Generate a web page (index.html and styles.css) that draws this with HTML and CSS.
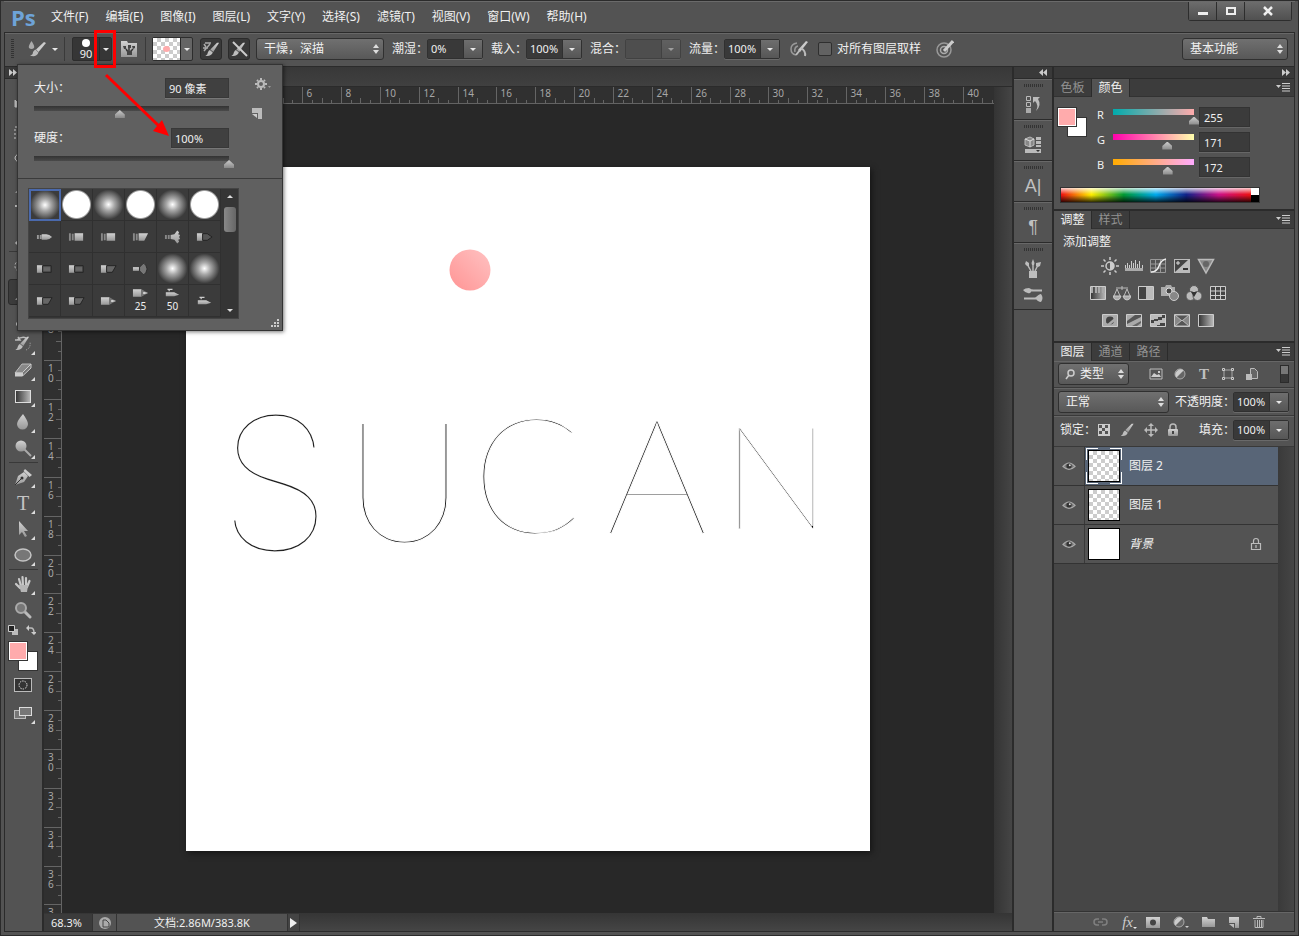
FILE: index.html
```html
<!DOCTYPE html>
<html lang="zh-CN">

<head>
  <meta charset="UTF-8" />
  <meta name="viewport" content="width=device-width, initial-scale=1.0" />
  <title>Ps</title>
  <link rel="stylesheet" href="styles.css">
</head>

<body>
  <!-- shared gradients and symbols -->
  <svg class="defs" width="0" height="0" aria-hidden="true">
    <defs>
      <linearGradient id="metal" x1="0" y1="0" x2="0" y2="1">
        <stop offset="0" stop-color="#d2d2d2" />
        <stop offset="1" stop-color="#979797" />
      </linearGradient>
      <linearGradient id="ramp">
        <stop offset="0" stop-color="#333" />
        <stop offset="1" stop-color="#bbb" />
      </linearGradient>
      <linearGradient id="dot" x1="0" y1="1" x2="1" y2="0">
        <stop offset="0" stop-color="#ff9494" />
        <stop offset="1" stop-color="#ffc2c2" />
      </linearGradient>
    </defs>
    <symbol id="eye" viewBox="0 0 14 10">
      <path d="M1 5.500Q7-1.500 13 5.500Q7 11 1 5.500Z" fill="#777" stroke="#aaa" stroke-width="1.200" />
      <circle cx="7" cy="5" r="2.600" fill="#333" />
      <circle cx="7.800" cy="4.200" r="1" fill="#ddd" />
    </symbol>
    <symbol id="lock" viewBox="0 0 12 14">
      <path d="M3 7V4a3 3 0 0 1 6 0v3" fill="none" stroke="#bbb" stroke-width="1.500" />
      <rect x="1" y="6" width="10" height="7" rx="1" fill="url(#metal)" />
      <path d="M6 8v3" stroke="#444" stroke-width="2" />
    </symbol>
    <symbol id="brush" viewBox="0 0 18 18">
      <path d="M17.500 1L10.500 12 7 9 15 1Z" fill="url(#metal)" />
      <path d="M6.500 9.500L10 12.500Q8 17.500 1 16.500 4 15 4 12.500 5 10 6.500 9.500Z" fill="#bdbdbd" />
    </symbol>
    <symbol id="menu-icon" viewBox="0 0 14 9">
      <path d="M0 2h5L2.500 5Z" fill="#ccc" />
      <path d="M6 .5h8M6 3h8M6 5.500h8M6 8h8" stroke="#ccc" />
    </symbol>
    <symbol id="b-round" viewBox="0 0 18 10">
      <path d="M1 3h2v4H1zM4 3h2v4H4z" fill="#999" />
      <path d="M6 2h5q3 0 6 3-3 3-6 3H6Z" fill="url(#metal)" />
    </symbol>
    <symbol id="b-flat" viewBox="0 0 18 10">
      <path d="M1 1h2v8H1zM4 1.500h2v7H4z" fill="#888" />
      <path d="M7 1h9v8H7Z" fill="url(#metal)" />
    </symbol>
    <symbol id="b-angle" viewBox="0 0 18 10">
      <path d="M1 1h2v8H1zM4 1.500h2v7H4z" fill="#888" />
      <path d="M7 1h10l-4 8H7Z" fill="url(#metal)" />
    </symbol>
    <symbol id="b-fan" viewBox="0 0 18 14">
      <path d="M1 5h2v4H1zM4 5h2v4H4z" fill="#888" />
      <path d="M7 5L11 4 14 0l2 2-1 2 2 1-1 2 1 2-2 1 1 2-2 2-3-4-4-1Z" fill="url(#metal)" />
    </symbol>
    <symbol id="b-darkfan" viewBox="0 0 18 14">
      <path d="M1 5h7v4H1z" fill="url(#metal)" />
      <path d="M8 5l4-4q3 0 4 6-1 6-4 6L8 9Z" fill="#777" stroke="#292929" />
    </symbol>
    <symbol id="b-point" viewBox="0 0 18 10">
      <path d="M1 1h6v8H1z" fill="url(#metal)" />
      <path d="M7 1.500h5l5 3.500-5 3.500H7Z" fill="#555" stroke="#222" />
    </symbol>
    <symbol id="b-dark" viewBox="0 0 18 10">
      <path d="M1 1h6v8H1z" fill="url(#metal)" />
      <path d="M7 1.500h9v7H7Z" fill="#555" stroke="#222" />
      <path d="M8 4h7M8 6h7" stroke="#777" />
    </symbol>
    <symbol id="b-darkangle" viewBox="0 0 18 10">
      <path d="M1 1h6v8H1z" fill="url(#metal)" />
      <path d="M7 1.500h10l-4 7H7Z" fill="#666" stroke="#222" />
    </symbol>
    <symbol id="b-pencil" viewBox="0 0 18 10">
      <path d="M1 1h9v8H1z" fill="url(#metal)" />
      <path d="M10 1l7 4-7 4Z" fill="#777" />
      <path d="M12 4l5 1-5 1Z" fill="#eee" />
    </symbol>
    <symbol id="b-air" viewBox="0 0 18 12">
      <path d="M3 1.500h6M5 2v2" stroke="#ccc" stroke-width="1.500" />
      <path d="M1 5h10l6 3-6 2H1Z" fill="url(#metal)" />
    </symbol>
  </svg>

  <div class="app">
    <header class="menubar">
      <span class="logo">Ps</span>
      <nav class="menus">
        <a href="#">文件(F)</a>
        <a href="#">编辑(E)</a>
        <a href="#">图像(I)</a>
        <a href="#">图层(L)</a>
        <a href="#">文字(Y)</a>
        <a href="#">选择(S)</a>
        <a href="#">滤镜(T)</a>
        <a href="#">视图(V)</a>
        <a href="#">窗口(W)</a>
        <a href="#">帮助(H)</a>
      </nav>
      <div class="window-buttons">
        <button aria-label="最小化"><svg width="10" height="10"><path d="M0 6h10v3H0z" fill="#eee" /></svg></button>
        <button aria-label="最大化"><svg width="10" height="10"><path d="M1 2h8v6H1z" fill="none" stroke="#eee" stroke-width="2" /></svg></button>
        <button class="close" aria-label="关闭"><svg width="10" height="10"><path d="M1 1l8 8M9 1L1 9" stroke="#eee" stroke-width="2.500" /></svg></button>
      </div>
    </header>

    <div class="options">
      <span class="grip"></span>
      <button class="plain tool-preset" aria-label="工具预设">
        <svg width="18" height="16" viewBox="0 0 18 16"><path d="M3.500 0Q7 5 6 7 3.500 9 1 7 0 5 3.500 0Z" fill="#aaa" /><path d="M18 2L10.500 11 8 8.500 16 1Z" fill="#ccc" /><path d="M7.500 8.500l3 3Q8 17 2 14.500 5 14 5 11 6 9 7.500 8.500Z" fill="#bbb" /></svg>
        <i class="caret"></i>
      </button>
      <span class="divider"></span>
      <button class="brush-preview" aria-label="画笔">
        <span class="brush-tip"><i></i>90</span>
        <span class="drop"><i class="caret"></i></span>
      </button>
      <button class="plain" aria-label="画笔面板">
        <svg width="18" height="16"><path d="M1 0h6l1 2h9v14H1Z" fill="url(#metal)" /><path d="M6 8l2 3M9 6v5M13 8l-3 3" stroke="#333" stroke-width="1.500" /><path d="M3 5h3v3H4zM8 4h3v3H8zM12 5h3v2l-2 1ZM7 10h5v4H7z" fill="#444" /></svg>
      </button>
      <span class="divider"></span>
      <button class="load-preview" aria-label="当前画笔载入">
        <span class="checker"><i></i></span>
        <span class="drop"><i class="caret"></i></span>
      </button>
      <button class="pressed" aria-label="每次描边后载入画笔">
        <svg width="18" height="16"><path d="M1 7h5M9 2L3 2M8 3L2 10M2 3l2 3" stroke="#aaa" fill="none" stroke-width="1.500" /><use href="#brush" width="16" height="15" x="2" y="1" /></svg>
      </button>
      <button class="pressed" aria-label="每次描边后清理画笔">
        <svg width="18" height="16"><use href="#brush" width="16" height="15" y="1" /><path d="M3 1l14 14" stroke="#ccc" stroke-width="2" /></svg>
      </button>
      <select class="select mix" aria-label="混合画笔组合">
        <option>干燥，深描</option>
      </select>
      <label class="field" for="wet">潮湿：</label>
      <span class="combo"><input id="wet" type="text" value="0%"><button aria-label="潮湿"><i class="caret"></i></button></span>
      <label class="field" for="load">载入：</label>
      <span class="combo"><input id="load" type="text" value="100%"><button aria-label="载入"><i class="caret"></i></button></span>
      <label class="field" for="blend">混合：</label>
      <span class="combo disabled"><input id="blend" type="text" disabled><button disabled aria-label="混合"><i class="caret"></i></button></span>
      <label class="field" for="flow">流量：</label>
      <span class="combo"><input id="flow" type="text" value="100%"><button aria-label="流量"><i class="caret"></i></button></span>
      <button class="plain air" aria-label="喷枪">
        <svg width="18" height="16"><path d="M7 2Q1 3 1 8t5 6M8 5Q4 6 5 11" fill="none" stroke="#999" stroke-width="1.500" /><path d="M18 1L10 11 8 9 16 0Z" fill="#ccc" /><path d="M11 7q5 3 4 8M6 14l4-5" stroke="#bbb" stroke-width="2" fill="none" /></svg>
      </button>
      <label class="check"><input type="checkbox">对所有图层取样</label>
      <button class="plain" aria-label="压力大小">
        <svg width="18" height="18"><circle cx="8" cy="10" r="7" fill="none" stroke="#999" stroke-width="1.500" /><circle cx="8" cy="10" r="3.500" fill="none" stroke="#aaa" stroke-width="1.500" /><path d="M17 1L8 11" stroke="#ccc" stroke-width="3" /></svg>
      </button>
      <select class="select workspace" aria-label="工作区">
        <option>基本功能</option>
      </select>
    </div>

    <main class="workarea">
      <aside class="toolbar">
        <div class="dock-head"><svg width="8" height="7"><path d="M0 0l4 3.500L0 7ZM4 0l4 3.500L4 7Z" fill="#ccc" /></svg></div>
        <div class="tools">
          <button aria-label="移动"><svg width="18" height="18"><path d="M1 2l7 7H1ZM12 6v10M7 11h10" stroke="#bbb" fill="#bbb" /></svg></button>
          <button aria-label="选框"><svg width="18" height="18"><path d="M1 3h16v12H1Z" fill="none" stroke="#ccc" stroke-dasharray="2" /></svg></button>
          <button aria-label="套索"><svg width="18" height="18"><ellipse cx="9" cy="8" rx="8" ry="5" fill="none" stroke="#ccc" /></svg></button>
          <button aria-label="快速选择"><svg width="18" height="18"><use href="#brush" width="18" height="18" /></svg></button>
          <button aria-label="裁剪"><svg width="18" height="18"><path d="M1 4h13v13M4 1v13h13" stroke="#bbb" fill="none" stroke-width="2" /></svg></button>
          <button aria-label="吸管"><svg width="18" height="18"><path d="M2 16L14 4" stroke="#bbb" stroke-width="3" /></svg></button>
          <hr>
          <button aria-label="污点修复"><svg width="18" height="18"><circle cx="7" cy="9" r="6" fill="none" stroke="#ccc" stroke-dasharray="2" /></svg></button>
          <button class="active" aria-label="画笔"><svg width="18" height="18"><use href="#brush" width="18" height="18" /></svg></button>
          <button aria-label="仿制图章"><svg width="18" height="18"><path d="M2 15h14M3 12h12M9 3v8" stroke="#bbb" stroke-width="3" /></svg></button>
          <button class="more" aria-label="历史记录画笔"><svg width="18" height="18"><path d="M1 5h5L4 2M3 5Q8 1 12 3" stroke="#bbb" stroke-width="1.500" fill="none" /><use href="#brush" width="16" height="15" y="1" x="0" /><path d="M12 15q5-2 4-8" fill="none" stroke="#aaa" stroke-dasharray="1" /></svg></button>
          <button class="more" aria-label="橡皮擦"><svg width="18" height="18"><path d="M8 3h9l-8 9H1Z" fill="#888" stroke="#bbb" /><path d="M1 11.500h7v4H1Z" fill="#ccc" /><path d="M8.500 15v-3.500L17 3v4Z" fill="#777" stroke="#ccc" /></svg></button>
          <button class="more" aria-label="渐变"><svg width="18" height="18"><rect x="1.500" y="3.500" width="15" height="12" fill="url(#ramp)" stroke="#ddd" /></svg></button>
          <button class="more" aria-label="模糊"><svg width="18" height="18"><path d="M9 1Q14 8 14 11a5.500 5.500 0 0 1-11 0Q3 8 9 1Z" fill="url(#metal)" /></svg></button>
          <button class="more" aria-label="减淡"><svg width="18" height="18"><path d="M10 10l7 7" stroke="#aaa" stroke-width="2" /><circle cx="7" cy="7" r="5.500" fill="url(#metal)" /></svg></button>
          <hr>
          <button class="more" aria-label="钢笔"><svg width="18" height="18"><path d="M1 17L4 8l6-4 4 4-4 6Z" fill="url(#metal)" /><path d="M11 1l7 6-2.500 2-6-6Z" fill="#ccc" /><path d="M1 17l7-7" stroke="#333" /><circle cx="8" cy="10" r="1.500" fill="#333" /></svg></button>
          <button class="more tool-type" aria-label="文字">T</button>
          <button class="more" aria-label="路径选择"><svg width="18" height="18"><path d="M5 1v14l3-3 3 5 2-1-3-5h4Z" fill="url(#metal)" /></svg></button>
          <button class="more" aria-label="椭圆"><svg width="18" height="18"><ellipse cx="9" cy="9" rx="8" ry="6" fill="#777" stroke="#c5c5c5" stroke-width="1.500" /></svg></button>
          <hr>
          <button class="more" aria-label="抓手"><svg width="18" height="18"><path d="M2 9l4 4M5 4l2 7M8.500 2L9 11M12 3v8M15.500 6L13 12" stroke="#c8c8c8" stroke-width="2.200" stroke-linecap="round" /><path d="M5 10h9l-1 7H7Z" fill="#b5b5b5" /></svg></button>
          <button aria-label="缩放"><svg width="18" height="18"><path d="M10 10l6 6" stroke="#bbb" stroke-width="3" stroke-linecap="round" /><circle cx="7" cy="7" r="5" fill="#777" stroke="#aaa" stroke-width="2" /></svg></button>
        </div>
        <div class="color-mini">
          <svg width="10" height="10"><path d="M4 4h6v6H4z" fill="#bbb" /><path d="M.5.5h6v6h-6z" fill="#222" stroke="#ccc" /></svg>
          <svg width="10" height="10"><path d="M2 3h3q3 0 3 5" fill="none" stroke="#bbb" stroke-width="1.500" /><path d="M0 3l3-3v6ZM8 10L5 7h6Z" fill="#ccc" /></svg>
        </div>
        <div class="swatches"><i class="back"></i><i class="front"></i></div>
        <div class="tools modes">
          <button aria-label="快速蒙版"><svg width="18" height="14"><rect x=".5" y=".5" width="17" height="13" fill="#333" stroke="#bbb" /><circle cx="9" cy="7" r="4" fill="none" stroke="#ddd" stroke-dasharray="1.500 1" /></svg></button>
          <button class="more" aria-label="屏幕模式"><svg width="18" height="14"><rect x=".5" y="4.500" width="11" height="8" fill="#777" stroke="#bbb" /><rect x="5.500" y="1.500" width="12" height="8" fill="#777" stroke="#ddd" /></svg></button>
        </div>
      </aside>

      <section class="document">
        <div class="tabbar"></div>
        <div class="corner"></div>
        <svg class="ruler-h" id="rulerH"></svg>
        <svg class="ruler-v" id="rulerV"></svg>
        <div class="stage">
          <svg class="artboard" id="artboard" viewBox="0 0 684 684">
            <circle cx="284" cy="103" r="20.500" fill="url(#dot)" />
            <g class="lettering">
              <text class="big" x="32" y="384">S</text>
              <text class="mid" x="158" y="374">U</text>
              <text x="286" y="366">C</text>
              <text x="420" y="366">A</text>
              <text class="small" x="536" y="362">N</text>
            </g>
          </svg>
        </div>
        <div class="vscroll"></div>
        <footer class="statusbar">
          <span class="zoom-level">68.3%</span>
          <button class="plain status-icon" aria-label="导出"><svg width="12" height="12"><circle cx="6" cy="6" r="6" fill="#aaa" /><path d="M4 3h3l3 3v4H4Z" fill="none" stroke="#444" /></svg></button>
          <span class="doc-size">文档:2.86M/383.8K</span>
          <button class="plain status-more" aria-label="更多"><svg width="7" height="10"><path d="M0 0l7 5-7 5Z" fill="#eee" /></svg></button>
        </footer>
      </section>

      <aside class="strip">
        <div class="dock-head"><svg width="8" height="7"><path d="M4 0L0 3.500 4 7ZM8 0L4 3.500 8 7Z" fill="#ccc" /></svg></div>
        <div class="group"><button aria-label="历史记录"><svg width="18" height="18"><path d="M2.500 1.500h4v4h-4zM2.500 7.500h4v4h-4z" fill="none" stroke="#bbb" /><path d="M2 13h5v5H2z" fill="#aaa" /><path d="M9 2h7l-2 2q4 6-2 12 3-6-1-10l-2 2Z" fill="#bbb" /></svg></button></div>
        <div class="group"><button aria-label="属性"><svg width="18" height="18"><path d="M1 3l5-2 4 2v6l-4 2-5-2Z" fill="#888" stroke="#bbb" /><path d="M1 3l5 2 4-2M6 5v6" stroke="#ddd" fill="none" /><path d="M12 1h5v3h-5zM12 5h5v3h-5zM12 9h5v2h-5zM1 13h16v4H1z" fill="#bbb" /><path d="M12 14h4l-2 2Z" fill="#333" /></svg></button></div>
        <div class="group"><button class="char" aria-label="字符">A|</button></div>
        <div class="group"><button class="char" aria-label="段落">¶</button></div>
        <div class="group">
          <button aria-label="画笔预设"><svg width="18" height="20"><path d="M7 12L3 5M9 12V3M11 12l3-6" stroke="#bbb" stroke-width="1.500" /><path d="M1 5l1-3 3 2v3H3ZM7.500 4L9 0l1.500 4-.5 2H8ZM12 7V4l5-1-1 4-2 1ZM5 12h8v7H5Z" fill="#bdbdbd" /></svg></button>
          <button aria-label="画笔"><svg width="20" height="16"><path d="M9 3.500h10M1 11.500h12" stroke="#bbb" stroke-width="2" /><path d="M0 3q2-2 6-2l4 2-3 3Q3 7 0 3ZM12 11q4-4 6-4 3 4 0 8-3 0-6-4Z" fill="#bbb" /></svg></button>
        </div>
      </aside>

      <aside class="panels">
        <div class="dock-head"><svg width="8" height="7"><path d="M0 0l4 3.500L0 7ZM4 0l4 3.500L4 7Z" fill="#ccc" /></svg></div>

        <section class="panel">
          <div class="tabs">
            <button>色板</button><button class="on">颜色</button>
            <svg class="panel-menu" width="14" height="9"><use href="#menu-icon" /></svg>
          </div>
          <div class="color-body">
            <div class="swatches"><i class="back"></i><i class="front"></i></div>
            <div class="channels">
              <div class="channel"><label for="r">R</label><input class="range red" id="r" type="range" max="255" value="255"><input type="text" value="255" aria-label="R 值"></div>
              <div class="channel"><label for="g">G</label><input class="range green" id="g" type="range" max="255" value="171"><input type="text" value="171" aria-label="G 值"></div>
              <div class="channel"><label for="b">B</label><input class="range blue" id="b" type="range" max="255" value="172"><input type="text" value="172" aria-label="B 值"></div>
            </div>
          </div>
          <div class="spectrum"><i class="hues"></i><i class="bw"></i></div>
        </section>

        <section class="panel">
          <div class="tabs">
            <button class="on">调整</button><button>样式</button>
            <svg class="panel-menu" width="14" height="9"><use href="#menu-icon" /></svg>
          </div>
          <div class="adjust-body">
            <p>添加调整</p>
            <div class="adjust-row">
              <svg width="18" height="18"><circle cx="9" cy="9" r="4" fill="#555" stroke="#ccc" stroke-width="1.500" /><path d="M9 5a4 4 0 0 1 0 8Z" fill="#ccc" /><path d="M9 0v3M9 15v3M0 9h3M15 9h3M2.500 2.500l2 2M13.500 13.500l2 2M15.500 2.500l-2 2M4.500 13.500l-2 2" stroke="#ccc" stroke-width="1.500" /></svg>
              <svg width="18" height="18"><path d="M0 11h18v3H0z" fill="#aaa" /><path d="M.5 11V8M2.500 11V6M4.500 11V8M6.500 11V4M8.500 11V6M10.500 11V3M12.500 11V7M14.500 11V4M17.500 11V8" stroke="#ccc" /></svg>
              <svg width="18" height="18"><path d="M1.500 2.500h15v13h-15zM6.500 2v14M11.500 2v14M1 7h16M1 11h16" stroke="#999" fill="none" /><path d="M2 15q6 0 8-6t7-7" stroke="#eee" fill="none" stroke-width="1.500" /></svg>
              <svg width="18" height="18"><path d="M1 2h16v14H1z" fill="#bbb" /><path d="M2 15V3h13Z" fill="#444" /><path d="M3 6h4M5 4v4" stroke="#ddd" /><path d="M10 12h5" stroke="#333" stroke-width="2" /></svg>
              <svg width="18" height="18"><path d="M1.500 2.500h15L9 16Z" fill="#888" stroke="#bbb" stroke-width="1.500" /><circle cx="9" cy="7" r="3" fill="#666" /></svg>
            </div>
            <div class="adjust-row">
              <svg width="18" height="18"><path d="M1.500 2.500h15v13h-15z" fill="url(#ramp)" stroke="#ccc" /><path d="M2 6h2M6 6h2M9 6h2M13 6h3" stroke="#aaa" stroke-width="6" /></svg>
              <svg width="18" height="18"><path d="M3 4h12M9 2v4M4 5L1 12M4 5l3 7M14 5l-3 7M14 5l3 7" stroke="#bbb" fill="none" /><path d="M0 12h8q-1 4-4 4t-4-4ZM10 12h8q-1 4-4 4t-4-4Z" fill="#aaa" stroke="#ccc" /></svg>
              <svg width="18" height="18"><path d="M1.500 2.500h15v13h-15z" fill="#444" stroke="#ccc" /><path d="M9 3h7v12H9z" fill="#bbb" /></svg>
              <svg width="18" height="18"><path d="M0 3h4l1-2h5l1 2h3v9H0z" fill="#aaa" /><circle cx="8" cy="7" r="3" fill="#444" stroke="#ddd" /><circle cx="13" cy="12" r="4.500" fill="#888" stroke="#ccc" /></svg>
              <svg width="18" height="18"><circle cx="9" cy="6" r="4.500" fill="#bbb" stroke="#555" /><circle cx="5.500" cy="12" r="4.500" fill="#bbb" stroke="#555" /><circle cx="12.500" cy="12" r="4.500" fill="#bbb" stroke="#555" /><path d="M6 8h6l-3 5Z" fill="#333" /></svg>
              <svg width="18" height="18"><path d="M1.500 2.500h15v13h-15zM6.500 2v14M11.500 2v14M1 7h16M1 11.500h16" stroke="#ccc" fill="#444" /></svg>
            </div>
            <div class="adjust-row">
              <svg width="18" height="18"><path d="M1.500 3.500h15v12h-15z" fill="#aaa" stroke="#ccc" /><circle cx="9" cy="9.500" r="4" fill="#444" /><path d="M3 15L15 4v5L8 15Z" fill="#aaa" /><path d="M6 12l6-5" stroke="#444" stroke-width="2" /></svg>
              <svg width="18" height="18"><path d="M1.500 3.500h15v12h-15z" fill="#aaa" stroke="#ccc" /><path d="M2 10l8-6h6v2L2 13Z" fill="#555" /><path d="M7 15l9-5v2l-4 3Z" fill="#666" /></svg>
              <svg width="18" height="18"><path d="M1.500 3.500h15v12h-15z" fill="#bbb" stroke="#ccc" /><path d="M2 9h3V8h4V6h4V4h3v3h-3v2H9v1H5v2H2ZM8 14h3v-2h5v3H8Z" fill="#444" /></svg>
              <svg width="18" height="18"><path d="M1.500 3.500h15v12h-15z" fill="#888" stroke="#ccc" /><path d="M2 4l7 6 7-6ZM2 15l7-6 7 6Z" fill="#555" stroke="#bbb" /></svg>
              <svg width="18" height="18"><path d="M1.500 3.500h15v12h-15z" fill="url(#ramp)" stroke="#ccc" /></svg>
            </div>
          </div>
        </section>

        <section class="panel layers">
          <div class="tabs">
            <button class="on">图层</button><button>通道</button><button>路径</button>
            <svg class="panel-menu" width="14" height="9"><use href="#menu-icon" /></svg>
          </div>
          <div class="layer-filter">
            <span class="search-select">
              <svg width="10" height="11"><circle cx="6" cy="4" r="3" fill="none" stroke="#ccc" stroke-width="1.500" /><path d="M4 6L1 10" stroke="#ccc" stroke-width="1.500" /></svg>
              <select class="select kind" aria-label="滤镜类型"><option>类型</option></select>
            </span>
            <div class="filter-icons">
              <svg width="14" height="12"><path d="M1 1h12v10H1z" fill="#555" stroke="#bbb" /><path d="M2 9l3-4 3 2 2-1 2 3Z" fill="#ccc" /><path d="M9 3h2v2H9z" fill="#ccc" /></svg>
              <svg width="14" height="12"><circle cx="7" cy="6" r="5" fill="#666" stroke="#aaa" /><path d="M10.500 2.500a5 5 0 0 0-7 7Z" fill="#ccc" /></svg>
              <span class="t-icon">T</span>
              <svg width="14" height="12"><path d="M3 2h8v8H3z" fill="none" stroke="#aaa" /><path d="M1.500.5h2v2h-2zM10.500.5h2v2h-2zM1.500 9.500h2v2h-2zM10.500 9.500h2v2h-2z" fill="#555" stroke="#ccc" /></svg>
              <svg width="14" height="14"><path d="M5.500 1.500h4l3 3v7h-7z" fill="#666" stroke="#bbb" /><path d="M1 7h6v6H1z" fill="#bbb" /></svg>
            </div>
            <button class="filter-switch" aria-label="图层过滤开关"></button>
          </div>
          <div class="layer-opts">
            <select class="select blend" aria-label="混合模式"><option>正常</option></select>
            <label for="opacity">不透明度：</label>
            <span class="combo"><input id="opacity" type="text" value="100%"><button aria-label="不透明度"><i class="caret"></i></button></span>
          </div>
          <div class="layer-opts lock-row">
            <span>锁定：</span>
            <svg width="12" height="12"><path d="M0 0h12v12H0z" fill="#ccc" /><path d="M1 1h3v3H1zM7 1h3v3H7zM4 4h3v3H4zM1 7h3v3H1zM7 7h3v3H7z" fill="#555" /></svg>
            <svg width="16" height="14"><use href="#brush" width="16" height="14" /></svg>
            <svg width="14" height="14"><path d="M7 2v10M2 7h10" stroke="#bbb" stroke-width="1.500" /><path d="M7 0l3 3H4ZM7 14l3-3H4ZM0 7l3-3v6ZM14 7l-3-3v6Z" fill="#bbb" /></svg>
            <svg width="12" height="14"><use href="#lock" /></svg>
            <label for="fill">填充：</label>
            <span class="combo"><input id="fill" type="text" value="100%"><button aria-label="填充"><i class="caret"></i></button></span>
          </div>
          <div class="layer-list">
            <ul>
              <li class="selected"><span class="visibility"><svg width="14" height="10"><use href="#eye" /></svg></span><span class="frame"><i class="thumb checker"></i></span><span>图层 2</span></li>
              <li><span class="visibility"><svg width="14" height="10"><use href="#eye" /></svg></span><span class="frame"><i class="thumb checker"></i></span><span>图层 1</span></li>
              <li><span class="visibility"><svg width="14" height="10"><use href="#eye" /></svg></span><span class="frame"><i class="thumb"></i></span><em>背景</em><svg class="locked" width="12" height="14" viewBox="0 0 12 14"><path d="M3.500 6V4a2.500 2.500 0 0 1 5 0v2M1.500 6.500h9v6h-9zM6 8v3" stroke="#bbb" fill="none" stroke-width="1.200" /></svg></li>
            </ul>
            <div class="list-scroll"></div>
          </div>
          <div class="layer-footer">
            <svg width="16" height="12"><path d="M6 3H4a3 3 0 0 0 0 6h2M9 3h2a3 3 0 0 1 0 6H9M5 6h5" fill="none" stroke="#808080" stroke-width="1.500" /></svg>
            <span class="fx">fx<i class="caret"></i></span>
            <svg width="14" height="12"><path d="M0 1h14v11H0z" fill="url(#metal)" /><circle cx="7" cy="6.500" r="3" fill="#444" /></svg>
            <svg width="16" height="12"><circle cx="6" cy="6" r="5" fill="#666" stroke="#aaa" /><path d="M9.500 2.500a5 5 0 0 0-7 7Z" fill="#ccc" /><path d="M12 10h4l-2 2Z" fill="#ccc" /></svg>
            <svg width="13" height="12"><path d="M0 1h5l1 2h7v8H0z" fill="url(#metal)" /></svg>
            <svg width="12" height="12"><path d="M1 1h10v11H7V7H1Z" fill="url(#metal)" /><path d="M1 8h5v4Z" fill="#bbb" /></svg>
            <svg width="12" height="12"><path d="M0 2.500h12M4 2V.5h4V2M2 4v7.500h8V4M4.500 4v7M6.500 4v7M8.500 4v7" fill="none" stroke="#bbb" /></svg>
          </div>
        </section>
      </aside>
    </main>

    <!-- brush picker dropdown -->
    <div class="picker">
      <div class="picker-top">
        <div class="picker-fields">
          <div class="picker-row"><label for="size">大小：</label><input type="text" class="wide" value="90 像素" aria-label="大小值"></div>
          <input class="range plain-range" id="size" type="range" value="44">
          <div class="picker-row second"><label for="hardness">硬度：</label><input type="text" value="100%" aria-label="硬度值"></div>
          <input class="range plain-range" id="hardness" type="range" value="100">
        </div>
        <div class="picker-side">
          <svg width="16" height="12"><circle cx="6" cy="6" r="3" fill="none" stroke="#bbb" stroke-width="2" /><path d="M6 0v2M6 10v2M0 6h2M10 6h2M2 2l1 1M9 9l1 1M10 2L9 3M3 9l-1 1" stroke="#bbb" stroke-width="2" /><path d="M13 8h3l-1.500 2Z" fill="#999" /></svg>
          <svg width="12" height="12"><path d="M1 1h10v11H7V6H1Z" fill="#bbb" /><path d="M1 7h5v4Z" fill="#ccc" /></svg>
        </div>
      </div>
      <div class="picker-list">
        <div class="brushes">
          <span class="soft chosen"></span><span class="hard"></span><span class="soft"></span><span class="hard"></span><span class="soft"></span><span class="hard"></span>
          <span><svg width="17" height="10"><use href="#b-round" /></svg></span>
          <span><svg width="17" height="10"><use href="#b-flat" /></svg></span>
          <span><svg width="17" height="10"><use href="#b-flat" /></svg></span>
          <span><svg width="17" height="10"><use href="#b-angle" /></svg></span>
          <span><svg width="17" height="14"><use href="#b-fan" /></svg></span>
          <span><svg width="17" height="10"><use href="#b-point" /></svg></span>
          <span><svg width="17" height="10"><use href="#b-dark" /></svg></span>
          <span><svg width="17" height="10"><use href="#b-dark" /></svg></span>
          <span><svg width="17" height="10"><use href="#b-darkangle" /></svg></span>
          <span><svg width="17" height="14"><use href="#b-darkfan" /></svg></span>
          <span class="soft"></span><span class="soft"></span>
          <span><svg width="17" height="10"><use href="#b-darkangle" /></svg></span>
          <span><svg width="17" height="10"><use href="#b-darkangle" /></svg></span>
          <span><svg width="17" height="10"><use href="#b-pencil" /></svg></span>
          <span><svg width="17" height="10"><use href="#b-pencil" /></svg>25</span>
          <span><svg width="17" height="10"><use href="#b-air" /></svg>50</span>
          <span><svg width="17" height="10"><use href="#b-air" /></svg></span>
        </div>
        <div class="picker-scroll"><i class="up"></i><b></b><i class="down"></i></div>
      </div>
      <svg class="resize" width="9" height="9"><path d="M6 0h2v2H6zM3 3h2v2H3zM6 3h2v2H6zM0 6h2v2H0zM3 6h2v2H3zM6 6h2v2H6z" fill="#ccc" /></svg>
    </div>

    <!-- red callout -->
    <svg class="callout" width="80" height="110">
      <rect x="2.500" y="2.500" width="19" height="35" fill="none" stroke="#f00" stroke-width="3" />
      <path d="M13 46L67 98" stroke="#f00" stroke-width="3" />
      <path d="M76 107L60 102 69 91Z" fill="#f00" />
    </svg>
  </div>

  <script>
    const UNIT = 684 / 17.6 / 4;
    const NS = 'http://www.w3.org/2000/svg';

    function add(svg, name, attrs, text) {
      const el = document.createElementNS(NS, name);
      for (const key in attrs) el.setAttribute(key, attrs[key]);
      if (text) el.textContent = text;
      svg.appendChild(el);
    }

    function drawRuler(svg, vertical) {
      const box = svg.getBoundingClientRect();
      const art = document.getElementById('artboard').getBoundingClientRect();
      const zero = vertical ? art.top - box.top : art.left - box.left;
      const length = vertical ? box.height : box.width;
      const depth = vertical ? box.width : box.height;
      svg.innerHTML = '';

      for (let i = Math.ceil(-zero / UNIT); zero + i * UNIT < length; i++) {
        const p = Math.floor(zero + i * UNIT) + 0.5;
        const major = i % 4 === 0;
        const from = major ? 0 : depth - (i % 2 === 0 ? 6 : 4);
        add(svg, 'path', { d: vertical ? `M${from} ${p}H${depth}` : `M${p} ${from}V${depth}` });
        if (!major) continue;
        const label = String(Math.abs(i / 2));
        if (vertical) {
          [...label].forEach((c, n) => add(svg, 'text', { x: 4, y: p + 11 + n * 10 }, c));
        } else {
          add(svg, 'text', { x: p + 4, y: 10 }, label);
        }
      }
    }

    function drawRulers() {
      drawRuler(document.getElementById('rulerH'), false);
      drawRuler(document.getElementById('rulerV'), true);
    }

    window.addEventListener('DOMContentLoaded', drawRulers);
    window.addEventListener('resize', drawRulers);
  </script>
</body>

</html>
```
FILE: styles.css
```css
* {
  box-sizing: border-box;
}

body {
  margin: 0;
  background: #535353;
  color: #f0f0f0;
  font: 12px/16px "Noto Sans", "Noto Sans CJK SC", sans-serif;
}

button,
input,
select {
  margin: 0;
  padding: 0;
  border: 0;
  background: none;
  color: inherit;
  font: inherit;
}

svg {
  display: block;
  flex: none;
}

a {
  color: inherit;
  text-decoration: none;
}

.defs {
  position: absolute;
}

.app {
  position: relative;
  display: flex;
  flex-direction: column;
  height: 100vh;
  padding: 0 3px 3px;
  border: 1px solid #2b2b2b;
  overflow: hidden;
}

/* menu bar */
.menubar {
  display: flex;
  align-items: center;
  height: 31px;
  padding-left: 7px;
  border-top: 1px solid #6a6a6a;
}

.logo {
  width: 40px;
  color: #6ea3d8;
  font: bold 22px/28px "Open Sans", sans-serif;
}

.menus {
  display: flex;
  gap: 17px;
  flex: 1;
}

.window-buttons {
  display: flex;
  align-self: flex-start;
  margin-right: 3px;
  border: 1px solid #2d2d2d;
  border-top: 0;
  border-radius: 0 0 3px 3px;
}

.window-buttons button {
  display: grid;
  place-items: center;
  width: 28px;
  height: 18px;
  background: linear-gradient(#6c6c6c, #505050);
  border-right: 1px solid #2d2d2d;
}

.window-buttons .close {
  width: 46px;
  border-right: 0;
}

/* options bar */
.options {
  display: flex;
  align-items: center;
  height: 35px;
  padding: 0 6px 1px;
  border: 1px solid #2b2b2b;
  box-shadow: inset 0 1px #686868;
}

.grip {
  width: 3px;
  height: 20px;
  background: repeating-linear-gradient(#333 0 1px, #535353 1px 2px);
}

.divider {
  width: 1px;
  height: 24px;
  margin: 0 7px;
  background: #3a3a3a;
}

.caret {
  display: block;
  width: 0;
  border: 3px solid transparent;
  border-top-color: #e8e8e8;
  border-bottom: 0;
}

.plain {
  display: flex;
  align-items: center;
}

.tool-preset {
  gap: 6px;
  margin-left: 14px;
  margin-right: -1px;
}

.brush-preview,
.load-preview {
  display: flex;
  height: 24px;
  border: 1px solid #2d2d2d;
  border-radius: 2px;
}

.brush-preview {
  margin-right: 8px;
  background: #363636;
}

.brush-tip {
  width: 26px;
  font-size: 11px;
  line-height: 12px;
}

.brush-tip i {
  display: block;
  width: 8px;
  height: 8px;
  margin: 1px auto 1px;
  border-radius: 50%;
  background: #fff;
}

.drop {
  display: grid;
  place-items: center;
  width: 12px;
  border-left: 1px solid #292929;
}

.load-preview {
  margin: 0 7px 0 -1px;
  background: #656565;
}

.checker {
  background: repeating-conic-gradient(#ccc 0 25%, #fff 0 50%) 0 0 / 8px 8px;
}

.load-preview .checker {
  display: grid;
  place-items: center;
  width: 27px;
}

.load-preview .checker i {
  width: 7px;
  height: 6px;
  border-radius: 50%;
  background: #ffabac;
}

.pressed {
  display: grid;
  place-items: center;
  width: 22px;
  height: 22px;
  margin-right: 6px;
  border: 1px solid #2b2b2b;
  border-radius: 3px;
  background: #393939;
}

.select {
  height: 22px;
  padding: 0 7px;
  border: 1px solid #303030;
  border-radius: 3px;
  background: url("data:image/svg+xml,%3Csvg xmlns='http://www.w3.org/2000/svg' width='6' height='10'%3E%3Cpath d='M0 4L3 0L6 4ZM0 6L3 10L6 6Z' fill='%23ddd'/%3E%3C/svg%3E") right 4px center no-repeat, linear-gradient(#707070, #585858);
  appearance: none;
}

.mix {
  width: 128px;
}

.field {
  width: 35px;
  margin-left: 8px;
  white-space: nowrap;
}

.combo {
  display: flex;
  width: 56px;
  height: 20px;
  border: 1px solid #303030;
  border-radius: 2px;
  box-shadow: 0 1px #6a6a6a;
}

.combo input {
  width: 35px;
  padding-left: 3px;
  background: #393939;
  font-size: 11px;
}

.combo button {
  display: grid;
  place-items: center;
  flex: 1;
  border-left: 1px solid #303030;
  background: linear-gradient(#6e6e6e, #565656);
}

.combo.disabled {
  opacity: 0.5;
}

.combo.disabled input {
  background: #4a4a4a;
}

.air {
  margin: 0 10px;
}

.check {
  display: flex;
  align-items: center;
  gap: 5px;
  margin-right: 15px;
}

.check input {
  width: 14px;
  height: 14px;
  border: 1px solid #2f2f2f;
  border-radius: 2px;
  background: #626262;
  appearance: none;
}

.workspace {
  width: 106px;
  margin-left: auto;
}

/* main area */
.workarea {
  display: grid;
  grid-template-columns: 37px 1fr 38px 240px;
  gap: 2px;
  flex: 1;
  min-height: 0;
  border: 1px solid #2b2b2b;
  border-top: 0;
  background: #2b2b2b;
}

.workarea > * {
  min-width: 0;
  min-height: 0;
}

.dock-head {
  display: flex;
  align-items: center;
  height: 12px;
  padding: 0 4px;
  border-bottom: 1px solid #2b2b2b;
  background: #393939;
}

.toolbar {
  background: #535353;
}

.tools {
  display: flex;
  flex-direction: column;
  align-items: center;
  padding: 15px 1px 0 0;
}

.tools button {
  position: relative;
  display: grid;
  place-items: center;
  width: 30px;
  height: 26px;
}

.tools .active {
  border: 1px solid #2b2b2b;
  border-radius: 3px;
  background: #3c3c3c;
}

.more::after {
  position: absolute;
  right: 3px;
  bottom: 2px;
  border: 2px solid #ddd;
  border-top-color: transparent;
  border-left-color: transparent;
  content: "";
}

.tools hr {
  width: 29px;
  margin: 1px 0 1px;
  border: 0;
  border-top: 1px solid #393939;
}

.tool-type {
  color: #c4c4c4;
  font: 20px/20px "Liberation Serif", serif;
}

.color-mini {
  display: flex;
  justify-content: space-between;
  padding: 2px 6px 0 3px;
}

.swatches {
  position: relative;
  height: 31px;
}

.swatches i {
  position: absolute;
  width: 18px;
  height: 18px;
  border: 1px solid #fff;
  outline: 1px solid #333;
}

.swatches .front {
  top: 1px;
  left: 4px;
  background: #ffabac;
}

.swatches .back {
  top: 11px;
  left: 14px;
  background: #fff;
}

.toolbar .swatches {
  margin-top: 6px;
}

.modes {
  gap: 2px;
  padding-top: 0;
}

/* document */
.document {
  display: grid;
  grid-template: 20px 17px minmax(0, 1fr) 18px / 18px minmax(0, 1fr) 18px;
}

.tabbar {
  grid-column: 1 / -1;
  border-bottom: 1px solid #2b2b2b;
  background: linear-gradient(#383838, #404040);
}

.corner {
  background: #303030;
}

.ruler-h,
.ruler-v {
  width: 100%;
  height: 100%;
  overflow: hidden;
  background: #303030;
}

.ruler-h {
  border-bottom: 1px solid #636363;
}

.ruler-v {
  grid-area: 3 / 1;
  border-right: 1px solid #636363;
}

.ruler-h path,
.ruler-v path {
  stroke: #656565;
}

.ruler-h text,
.ruler-v text {
  fill: #a6a6a6;
  font-size: 10px;
}

.stage {
  display: grid;
  grid-area: 3 / 2;
  place-items: center;
  overflow: hidden;
  background: #282828;
}

.artboard {
  width: 684px;
  max-width: 100%;
  background: #fff;
  box-shadow: 2px 2px 6px #151515;
}

/* the white stroke thins the letters down to hairlines */
.lettering {
  fill: #222;
  stroke: #fff;
  stroke-width: 1px;
  font: 100 160px Lato, sans-serif;
}

.lettering .big {
  font-family: Inter, sans-serif;
  font-size: 187px;
  stroke-width: 3px;
}

.lettering .mid {
  font-size: 168px;
}

.lettering .small {
  fill: #000;
  font-size: 145px;
}

.vscroll {
  grid-area: 2 / 3 / 4 / 4;
  background: linear-gradient(90deg, #343434, #454545);
}

.statusbar {
  display: flex;
  grid-column: 1 / -1;
  padding-top: 1px;
  background: linear-gradient(#353535, #454545);
  font-size: 11px;
  line-height: 18px;
}

.statusbar > * {
  justify-content: center;
  border-right: 1px solid #333;
  background: #535353;
}

.statusbar .zoom-level {
  width: 49px;
  padding-left: 7px;
  background: #3b3b3b;
}

.status-icon {
  width: 24px;
}

.doc-size {
  width: 171px;
  text-align: center;
}

.statusbar .status-more {
  width: 12px;
  background: #444;
}

/* icon strip */
.strip {
  background: #535353;
}

.strip .dock-head {
  justify-content: center;
  padding-left: 24px;
}

.group {
  display: flex;
  flex-direction: column;
  align-items: center;
  gap: 8px;
  min-height: 41px;
  padding: 4px 0 6px;
  border-top: 1px solid #686868;
  border-bottom: 1px solid #2b2b2b;
}

.group::before {
  width: 19px;
  height: 3px;
  background: repeating-linear-gradient(90deg, #333 0 1px, #535353 1px 2px);
  content: "";
}

.char {
  color: #c0c0c0;
  font: 18px/18px "Liberation Sans", sans-serif;
}

/* panels */
.panels {
  display: flex;
  flex-direction: column;
  background: #2b2b2b;
}

.panels .dock-head {
  justify-content: flex-end;
}

.panel {
  margin-bottom: 2px;
  background: #535353;
}

.tabs {
  display: flex;
  align-items: center;
  height: 18px;
  background: #3c3c3c;
  border-bottom: 1px solid #323232;
}

.tabs button {
  width: 38px;
  height: 18px;
  border-right: 1px solid #2b2b2b;
  color: #929292;
}

.tabs .on {
  background: #535353;
  color: #f0f0f0;
}

.panel-menu {
  margin: 0 4px 0 auto;
}

.color-body {
  display: flex;
  height: 90px;
  padding-top: 10px;
}

.color-body .swatches {
  width: 43px;
}

.channel {
  display: flex;
  height: 25px;
}

.channel label {
  width: 11px;
  font-size: 11px;
}

.channel input[type="text"] {
  width: 51px;
  height: 20px;
  padding-left: 4px;
  border: 1px solid #333;
  background: #3b3b3b;
  box-shadow: 0 1px #666;
  font-size: 11px;
}

.range {
  width: 91px;
  height: 20px;
  background-position: center 2px;
  background-repeat: no-repeat;
  background-size: calc(100% - 10px) 6px;
  appearance: none;
}

.range::-webkit-slider-thumb {
  width: 10px;
  height: 8px;
  margin-top: 7px;
  background: linear-gradient(#ccc, #888);
  clip-path: polygon(50% 0, 100% 55%, 100% 100%, 0 100%, 0 55%);
  appearance: none;
}

.red {
  background-image: linear-gradient(90deg, #00abac, #ffabac);
}

.green {
  background-image: linear-gradient(90deg, #ff00ac, #ffabac 67%, #ffffac);
}

.blue {
  background-image: linear-gradient(90deg, #ffab00, #ffabac 67%, #ffabff);
}

.spectrum {
  display: flex;
  width: 200px;
  height: 16px;
  margin-left: 6px;
  border: 1px solid #333;
}

.hues {
  flex: 1;
  background: linear-gradient(#fffc, #fff0 45%, #0000 50%, #000c), linear-gradient(90deg, #e11, #fe0 16%, #093 33%, #0ae 50%, #128 66%, #c18 83%, #e11);
}

.bw {
  width: 8px;
  background: linear-gradient(#fff 50%, #000 50%);
}

.panel:nth-of-type(1),
.panel:nth-of-type(2) {
  height: 130px;
}

.adjust-body p {
  margin: 5px 9px 7px;
}

.adjust-row {
  display: flex;
  justify-content: center;
  gap: 6px;
  margin-bottom: 9px;
  padding-right: 32px;
}

/* layers panel */
.layers {
  display: flex;
  flex: 1;
  flex-direction: column;
  min-height: 0;
  margin-bottom: 0;
}

.layer-filter,
.layer-opts {
  display: flex;
  align-items: center;
  height: 28px;
  padding: 0 5px 0 4px;
  border-top: 1px solid #666;
  border-bottom: 1px solid #393939;
}

.layer-filter {
  height: 27px;
  padding-bottom: 1px;
}

.search-select {
  display: grid;
  align-items: center;
}

.search-select > * {
  grid-area: 1 / 1;
}

.search-select svg {
  z-index: 1;
  margin-left: 7px;
}

.kind {
  width: 71px;
  padding-left: 21px;
}

.filter-icons {
  display: flex;
  align-items: center;
  gap: 10px;
  margin-left: 20px;
}

.t-icon {
  width: 14px;
  color: #c0c0c0;
  font: bold 15px/14px "Liberation Serif", serif;
  text-align: center;
}

.filter-switch {
  width: 9px;
  height: 18px;
  margin-left: auto;
  border: 1px solid #2b2b2b;
  background: linear-gradient(#777 50%, #383838 50%);
}

.blend {
  width: 111px;
}

.layer-opts label {
  margin-left: auto;
  white-space: nowrap;
}

.layer-opts .combo {
  margin-left: -2px;
}

.lock-row {
  gap: 9px;
  height: 31px;
  padding-bottom: 3px;
}

.lock-row > span:first-child {
  width: 34px;
  margin-left: 2px;
  margin-right: -5px;
  white-space: nowrap;
}

.lock-row .combo {
  margin-left: -11px;
}

.layer-list {
  display: flex;
  flex: 1;
  min-height: 0;
  background: #464646;
}

.layer-list ul {
  flex: 1;
  margin: 0;
  padding: 0;
  list-style: none;
}

.layer-list li {
  display: flex;
  align-items: center;
  height: 39px;
  border-bottom: 1px solid #333;
  background: #535353;
}

.layer-list .selected {
  background: #586577;
}

.visibility {
  display: grid;
  place-items: center;
  align-self: stretch;
  width: 31px;
  border-right: 1px solid #393939;
  background: #535353;
}

.frame {
  width: 36px;
  height: 36px;
  margin: 0 7px 0 1px;
  padding: 2px;
}

.selected .frame {
  background: linear-gradient(#fff, #fff) 0 0 / 12px 1px, linear-gradient(#fff, #fff) 0 0 / 1px 12px, linear-gradient(#fff, #fff) 100% 0 / 12px 1px, linear-gradient(#fff, #fff) 100% 0 / 1px 12px, linear-gradient(#fff, #fff) 0 100% / 12px 1px, linear-gradient(#fff, #fff) 0 100% / 1px 12px, linear-gradient(#fff, #fff) 100% 100% / 12px 1px, linear-gradient(#fff, #fff) 100% 100% / 1px 12px;
  background-repeat: no-repeat;
}

.thumb {
  display: block;
  height: 32px;
  border: 1px solid #000;
  background-color: #fff;
}

.locked {
  margin: 0 16px 0 auto;
}

.list-scroll {
  width: 16px;
  background: linear-gradient(90deg, #3a3a3a, #454545);
}

.layer-footer {
  display: flex;
  align-items: center;
  justify-content: flex-end;
  gap: 13px;
  height: 19px;
  padding-right: 29px;
  border-top: 1px solid #666;
  box-shadow: 0 -1px #333;
}

.fx {
  display: flex;
  align-items: flex-end;
  margin-right: -4px;
  color: #ccc;
  font: italic 15px/14px "Liberation Serif", serif;
}

.fx .caret {
  border-width: 2px 2px 0;
}

/* brush picker */
.picker {
  position: absolute;
  top: 63px;
  left: 16px;
  width: 266px;
  height: 267px;
  border: 1px solid #333;
  background: #606060;
  box-shadow: 1px 1px 4px #0008;
}

.picker-top {
  display: flex;
  height: 114px;
  padding: 13px 12px 0 16px;
  border-bottom: 1px solid #3b3b3b;
}

.picker-fields {
  width: 195px;
}

.picker-row {
  display: flex;
  align-items: center;
  justify-content: space-between;
  height: 20px;
}

.picker-row.second {
  margin-top: 4px;
}

.picker-row input {
  width: 58px;
  height: 20px;
  padding-left: 3px;
  border: 1px solid #383838;
  background: #404040;
  box-shadow: 0 1px #777;
  font-size: 11px;
}

.picker-row .wide {
  width: 64px;
}

.plain-range {
  display: block;
  width: 205px;
  margin: 6px -5px 0;
  background-image: linear-gradient(#333, #4a4a4a);
  background-size: calc(100% - 10px) 5px;
}

.plain-range::-webkit-slider-thumb {
  margin-top: 0;
}

.picker-side {
  display: flex;
  flex-direction: column;
  gap: 17px;
  margin-left: 26px;
}

.picker-side svg:last-child {
  margin-left: -4px;
}

.picker-list {
  display: flex;
  width: 211px;
  height: 131px;
  margin: 9px 0 0 10px;
  border: 1px solid #444;
  background: #353535;
}

.brushes {
  display: grid;
  grid-template-columns: repeat(6, 32px);
  grid-auto-rows: 32px;
}

.brushes span {
  display: grid;
  place-items: center;
  align-content: center;
  border: solid #303030;
  border-width: 0 1px 1px 0;
  background-color: #3b3b3b;
  font-size: 10px;
  line-height: 16px;
}

.brushes .soft {
  background-image: radial-gradient(circle, #fff 0, #a8a8a8 6px, #606060 12px, #3b3b3b 15px);
}

.brushes .hard {
  background-image: radial-gradient(circle, #fff 13px, #3b3b3b 15px);
}

.brushes .chosen {
  border: 2px solid #4a69ac;
}

.picker-scroll {
  display: flex;
  flex-direction: column;
  align-items: center;
  flex: 1;
  padding: 6px 0;
}

.picker-scroll b {
  width: 12px;
  height: 25px;
  margin: 9px 0 auto;
  border-radius: 3px;
  background: linear-gradient(90deg, #888, #666);
}

.picker-scroll i {
  border: 3px solid transparent;
}

.picker-scroll .up {
  border-top: 0;
  border-bottom-color: #ddd;
}

.picker-scroll .down {
  border-bottom: 0;
  border-top-color: #ddd;
}

.resize {
  position: absolute;
  right: 2px;
  bottom: 2px;
}

.callout {
  position: absolute;
  top: 28px;
  left: 92px;
}
```
